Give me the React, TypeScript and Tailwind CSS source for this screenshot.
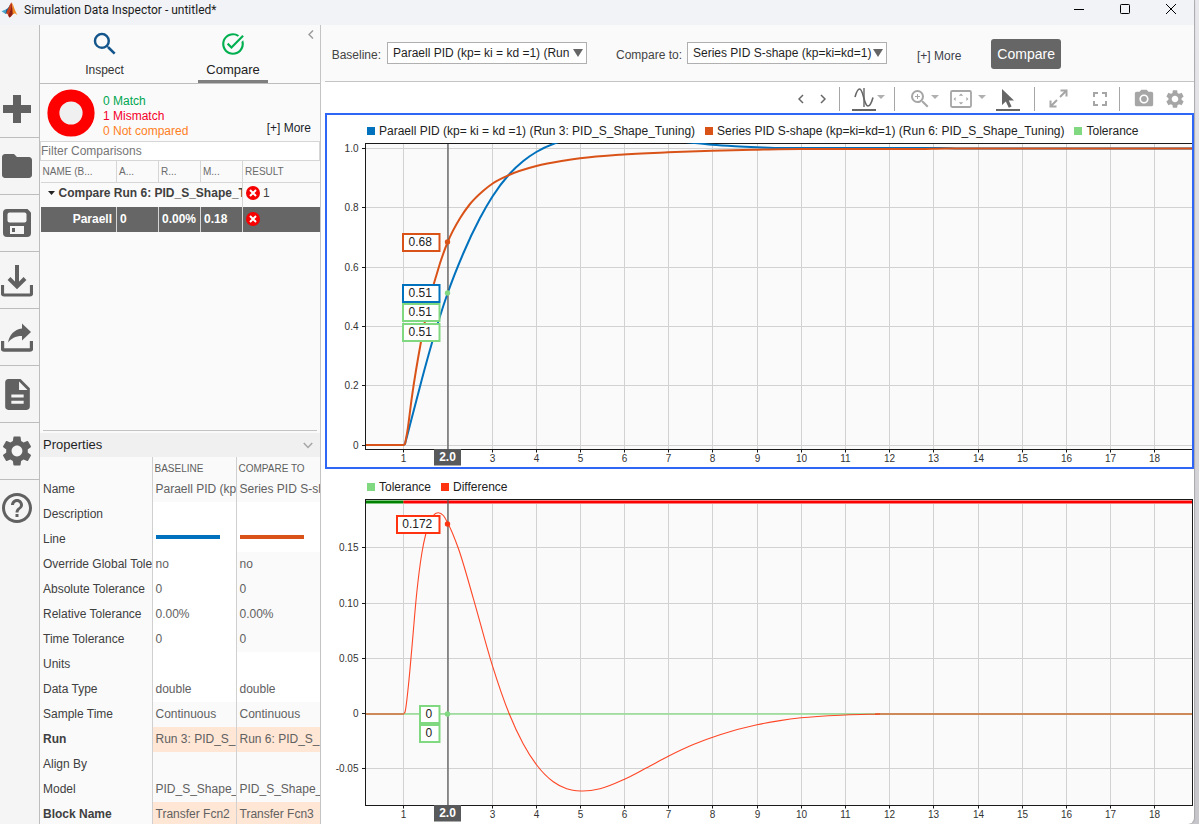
import type { ReactNode } from "react";
import {
  MdDescription,
  MdFolder,
  MdFullscreen,
  MdHelpOutline,
  MdPhotoCamera,
  MdSearch,
  MdSettings,
  MdTaskAlt,
  MdZoomIn,
} from "react-icons/md";

type Point = [number, number];

const BLUE = "#0072bd";
const ORANGE = "#d95319";
const GREEN = "#80d880";
const RED = "#ff330f";

/* ---------- window chrome ---------- */

function AppLogo() {
  return (
    <svg width="17" height="16" viewBox="0 0 17 16" aria-hidden="true">
      <path d="M0.5 9.3 5.2 7.2 7.6 9.2 4.6 12Z" fill="#4aa3c9" />
      <path d="M5.2 7.2C7 6.8 7.8 4.4 9.4 2.2L7.6 9.6 4.6 12Z" fill="#1f5f94" />
      <path d="M10.6 0.6C9.2 1 8.2 5.6 6.2 8.6L5 11.6C7 11 7.4 14.6 8.4 15.4 10.6 15 11.4 12 13 11.4Z" fill="#c8401c" />
      <path d="M10.6 0.6C12.6 2.6 13.8 9.4 16.6 13.2 14.8 11.4 12.8 11 11.2 12.4 11.8 9 11.6 3.6 10.6 0.6Z" fill="#f08a24" />
      <path d="M10.6 0.6C10.9 4 9.6 10 7.4 13.2L8.4 15.4C10 14.8 10.6 13 11.6 12Z" fill="#8c1f16" />
    </svg>
  );
}

function TitleBar() {
  return (
    <header className="flex h-[25px] shrink-0 items-start bg-[#f2f3f7] pt-[2px] pl-[1px]">
      <AppLogo />
      <h1 className="ml-[6px] flex-1 font-['Roboto',sans-serif] text-[12px] leading-4 text-[#1b1b1b]">
        Simulation Data Inspector - untitled*
      </h1>
      <div className="flex items-start pt-[1px] text-black">
        <button aria-label="Minimize" className="flex w-[46px] justify-center">
          <svg width="12" height="12" viewBox="0 0 12 12" stroke="currentColor"><path d="M1 6.5H11" /></svg>
        </button>
        <button aria-label="Maximize" className="flex w-[46px] justify-center">
          <svg width="12" height="12" viewBox="0 0 12 12" stroke="currentColor" fill="none"><rect x="1.5" y="1.5" width="9" height="9" rx="0.8" /></svg>
        </button>
        <button aria-label="Close" className="flex w-[46px] justify-center">
          <svg width="12" height="12" viewBox="0 0 12 12" stroke="currentColor"><path d="M1 1 11 11M11 1 1 11" /></svg>
        </button>
      </div>
    </header>
  );
}

/* ---------- left icon rail ---------- */

const PlusIcon = () => (
  <svg width="28" height="28" viewBox="0 0 28 28" fill="currentColor"><path d="M10 0h8v10h10v8H18v10h-8V18H0v-8h10z" /></svg>
);

const SaveIcon = () => (
  <svg width="28" height="28" viewBox="0 0 28 28">
    <path d="M4 0H24.5L28 3.5V24a4 4 0 0 1-4 4H4a4 4 0 0 1-4-4V4a4 4 0 0 1 4-4z" fill="currentColor" />
    <rect x="4.5" y="3.5" width="19" height="10" rx="2" fill="#f5f5f5" />
    <rect x="7" y="17" width="14" height="8" fill="#f5f5f5" />
    <rect x="9" y="19" width="3" height="4" fill="currentColor" />
  </svg>
);

const ImportIcon = () => (
  <svg width="32" height="36" viewBox="0 -4 32 36" fill="none" stroke="currentColor">
    <path d="M16 -1V20" strokeWidth="4" />
    <path d="M8 12.5 16 20.5 24 12.5" strokeWidth="4" />
    <path d="M1.5 19V27.5Q1.5 29 3 29H29Q30.5 29 30.5 27.5V19" strokeWidth="3.2" />
  </svg>
);

const ExportIcon = () => (
  <svg width="32" height="34" viewBox="0 -2 32 34">
    <path d="M1.5 19V26.5Q1.5 28 3 28H29Q30.5 28 30.5 26.5V19" fill="none" stroke="currentColor" strokeWidth="3.4" />
    <path d="M21 1.5 30 10 21 18.5V14C14 14 10.5 16.5 7 20.5 8.5 13 13 7.5 21 6.5Z" fill="currentColor" />
  </svg>
);

const railItems: { label: string; icon: ReactNode }[] = [
  { label: "New", icon: <PlusIcon /> },
  { label: "Open", icon: <MdFolder size={36} /> },
  { label: "Save", icon: <SaveIcon /> },
  { label: "Import", icon: <ImportIcon /> },
  { label: "Export", icon: <ExportIcon /> },
  { label: "Report", icon: <MdDescription size={37} /> },
  { label: "Preferences", icon: <MdSettings size={36} /> },
  { label: "Help", icon: <MdHelpOutline size={36} /> },
];

function IconRail() {
  return (
    <nav className="flex w-10 shrink-0 flex-col border-r border-[#bdbdbd] bg-[#f5f5f5] pt-14">
      {railItems.map((item) => (
        <button
          key={item.label}
          aria-label={item.label}
          className="flex h-[57px] shrink-0 items-center justify-center border-b border-[#bdbdbd] pr-[5px] text-[#616161] last:border-transparent [&>svg]:shrink-0"
        >
          {item.icon}
        </button>
      ))}
    </nav>
  );
}

/* ---------- comparison panel ---------- */

function ModeTabs() {
  return (
    <div className="flex h-[59px] shrink-0 border-b border-[#bdbdbd]">
      <button className="flex w-[129px] flex-col items-center pt-1">
        <MdSearch size={30} className="text-[#14568c]" />
        <span className="mt-[3px] text-[12px] leading-4 text-[#333]">Inspect</span>
      </button>
      <button className="flex w-[128px] flex-col items-center pt-[6px]">
        <MdTaskAlt size={26} className="text-[#00b050]" />
        <span className="mt-[5px] text-[13px] leading-4 text-[#222]">Compare</span>
        <span className="mt-[2px] h-[3px] w-[70px] bg-[#7f7f7f]" />
      </button>
      <button aria-label="Collapse panel" className="flex flex-1 justify-center pt-[5px] pl-1">
        <svg width="6" height="9" viewBox="0 0 6 9" fill="none" stroke="#9a9a9a" strokeWidth="1.4"><path d="M5 0.5 1 4.5 5 8.5" /></svg>
      </button>
    </div>
  );
}

function Summary() {
  return (
    <div className="flex h-[57px] shrink-0 items-center pl-[7px]">
      <svg width="48" height="48" viewBox="0 0 48 48" aria-hidden="true">
        <circle cx="24" cy="24" r="17.6" fill="#f0f0f0" stroke="#ff0000" strokeWidth="12" />
      </svg>
      <ul className="mt-[7px] ml-2 flex-1 text-[12px] leading-[15px]">
        <li className="text-[#00a650]">0 Match</li>
        <li className="text-[#f5002a]">1 Mismatch</li>
        <li className="text-[#ff7f1e]">0 Not compared</li>
      </ul>
      <button className="mt-[30px] mr-[9px] text-[12px] leading-4 text-[#1b1f2a]">[+] More</button>
    </div>
  );
}

const FailBadge = () => (
  <svg width="14" height="14" viewBox="0 0 14 14" role="img" aria-label="Mismatch" className="inline-block shrink-0">
    <circle cx="7" cy="7" r="7" fill="#f60000" />
    <path d="M4 4 10 10M10 4 4 10" stroke="#fff" strokeWidth="2" />
  </svg>
);

function ComparisonTable() {
  const head = ["NAME (B...", "A...", "R...", "M...", "RESULT"];
  return (
    <table className="w-full table-fixed border-collapse text-left">
      <colgroup>
        <col className="w-[76px]" />
        <col className="w-[42px]" />
        <col className="w-[42px]" />
        <col className="w-[42px]" />
        <col />
      </colgroup>
      <thead>
        <tr className="h-[21px] text-[10px] leading-4 text-[#6b6b6b]">
          {head.map((h) => (
            <th key={h} className="border-r border-b border-[#d6d6d6] pt-0.5 pl-[2px] font-normal last:border-r-0">
              {h}
            </th>
          ))}
        </tr>
      </thead>
      <tbody className="text-[12px] leading-4">
        <tr className="h-[25px] text-[#404040]">
          <td colSpan={4} className="overflow-hidden border-r border-[#d6d6d6] pb-1 pl-[7px] font-bold whitespace-nowrap">
            <span className="flex items-center">
              <svg width="7" height="4" viewBox="0 0 7 4" className="mr-1 shrink-0"><path d="M0 0H7L3.5 4Z" fill="#222" /></svg>
              Compare Run 6: PID_S_Shape_Tuning
            </span>
          </td>
          <td className="pb-1 pl-[3px]">
            <span className="flex items-center gap-[3px]">
              <FailBadge />1
            </span>
          </td>
        </tr>
        <tr className="h-[25px] bg-[#666] font-bold text-white">
          <td className="border-r border-l border-[#d6d6d6] border-l-[#fafafa] pr-1 pb-0.5 text-right">Paraell</td>
          <td className="border-r border-[#d6d6d6] pb-0.5 pl-[3px]">0</td>
          <td className="border-r border-[#d6d6d6] pb-0.5 pl-[3px]">0.00%</td>
          <td className="border-r border-[#d6d6d6] pb-0.5 pl-[3px]">0.18</td>
          <td className="pb-0.5 pl-[3px]">
            <span className="flex items-center"><FailBadge /></span>
          </td>
        </tr>
      </tbody>
    </table>
  );
}

/* ---------- properties ---------- */

type Tone = "base" | "edit" | "diff" | "split";

const properties: { name: string; a: ReactNode; b: ReactNode; tone: Tone }[] = [
  { name: "Name", a: "Paraell PID (kp= ki = kd =1)", b: "Series PID S-shape (kp=ki=kd=1)", tone: "base" },
  { name: "Description", a: "", b: "", tone: "edit" },
  {
    name: "Line",
    a: <span className="mb-1 block h-1 w-16 bg-[#0072bd]" />,
    b: <span className="mb-1 block h-1 w-16 bg-[#d95319]" />,
    tone: "edit",
  },
  { name: "Override Global Tolerance", a: "no", b: "no", tone: "split" },
  { name: "Absolute Tolerance", a: "0", b: "0", tone: "split" },
  { name: "Relative Tolerance", a: "0.00%", b: "0.00%", tone: "split" },
  { name: "Time Tolerance", a: "0", b: "0", tone: "split" },
  { name: "Units", a: "", b: "", tone: "edit" },
  { name: "Data Type", a: "double", b: "double", tone: "edit" },
  { name: "Sample Time", a: "Continuous", b: "Continuous", tone: "base" },
  { name: "Run", a: "Run 3: PID_S_Shape_Tuning", b: "Run 6: PID_S_Shape_Tuning", tone: "diff" },
  { name: "Align By", a: "", b: "", tone: "base" },
  { name: "Model", a: "PID_S_Shape_Tuning", b: "PID_S_Shape_Tuning", tone: "base" },
  { name: "Block Name", a: "Transfer Fcn2", b: "Transfer Fcn3", tone: "diff" },
];

const toneA: Record<Tone, string> = {
  base: "bg-[#fafafa]",
  edit: "bg-white",
  diff: "bg-[#ffe6d5]",
  split: "bg-white",
};
const toneB: Record<Tone, string> = { ...toneA, split: "bg-[#fafafa]" };

function Properties() {
  return (
    <section className="shrink-0">
      <div className="mx-[3px] border-t border-[#c4c4c4] pb-[2px]" />
      <div className="flex h-6 items-center justify-between bg-[#f0f0f0] pr-[7px] pl-[3px]">
        <h2 className="text-[13px] leading-4 text-[#1f1f1f]">Properties</h2>
        <button aria-label="Collapse properties">
          <svg width="10" height="7" viewBox="0 0 10 7" fill="none" stroke="#a6a6a6" strokeWidth="1.5"><path d="M0.8 1 5 5.5 9.2 1" /></svg>
        </button>
      </div>
      <table className="w-full table-fixed border-collapse text-left text-[12px] leading-4">
        <colgroup>
          <col className="w-[112px]" />
          <col className="w-[84px]" />
          <col />
        </colgroup>
        <thead>
          <tr className="h-5 text-[10px] text-[#5f5f5f]">
            <td className="border-r border-[#d0d0d0]" />
            <th className="border-r border-[#d0d0d0] pt-1 pl-[2px] font-normal">BASELINE</th>
            <th className="pt-1 pl-[2px] font-normal">COMPARE TO</th>
          </tr>
        </thead>
        <tbody>
          {properties.map((p) => (
            <tr key={p.name} className="h-[25px] text-[#616161]">
              <th
                className={
                  "overflow-hidden border-r border-[#d0d0d0] pb-0.5 pl-[3px] whitespace-nowrap text-[#404040] " +
                  (p.tone === "diff" ? "font-bold" : "font-normal")
                }
              >
                {p.name}
              </th>
              <td className={"overflow-hidden border-r border-[#d0d0d0] pb-0.5 pl-[3px] whitespace-nowrap " + toneA[p.tone]}>{p.a}</td>
              <td className={"overflow-hidden pb-0.5 pl-[3px] whitespace-nowrap " + toneB[p.tone]}>{p.b}</td>
            </tr>
          ))}
        </tbody>
      </table>
    </section>
  );
}

function ComparePanel() {
  return (
    <aside className="flex w-[281px] shrink-0 flex-col overflow-hidden border-r border-[#c4c4c4] bg-[#fafafa]">
      <ModeTabs />
      <Summary />
      <input
        type="text"
        aria-label="Filter Comparisons"
        placeholder="Filter Comparisons"
        className="h-5 w-full shrink-0 border border-[#d6d6d6] bg-white text-[12px] leading-4 outline-none placeholder:text-[#757575]"
      />
      <ComparisonTable />
      <div className="min-h-0 flex-1" />
      <div className="h-[394px] shrink-0 overflow-hidden">
        <Properties />
      </div>
    </aside>
  );
}

/* ---------- run selection and toolbar ---------- */

function RunSelect({ id, label, value }: { id: string; label: string; value: string }) {
  return (
    <div className="flex items-center">
      <label htmlFor={id} className="w-[71px] pt-1 pr-1.5 text-right text-[12px] leading-4 whitespace-nowrap text-[#444]">
        {label}
      </label>
      <div className="relative">
        <select
          id={id}
          className="block h-[22px] w-[200px] appearance-none border border-[#b0b0b0] bg-white pr-3 pl-[5px] text-[12px] leading-4 text-[#1f1f1f]"
        >
          <option>{value}</option>
        </select>
        <svg width="10" height="8" viewBox="0 0 10 8" className="pointer-events-none absolute top-[7px] right-1">
          <path d="M0 0H10L5 8Z" fill="#666" />
        </svg>
      </div>
    </div>
  );
}

function RunBar() {
  return (
    <div className="flex h-[57px] shrink-0 bg-[#fafafa]">
      <div className="ml-1 flex flex-1 items-center border-b border-[#c4c4c4]">
        <div className="-ml-[9px]">
          <RunSelect id="baseline" label="Baseline:" value="Paraell PID (kp= ki = kd =1) (Run" />
        </div>
        <div className="ml-[29px]">
          <RunSelect id="compare-to" label="Compare to:" value="Series PID S-shape (kp=ki=kd=1)" />
        </div>
        <button className="mt-[5px] ml-[30px] text-[12px] leading-4 text-[#3c3f4a]">[+] More</button>
        <button className="mt-0.5 ml-[30px] h-[30px] rounded-[3px] bg-[#666] px-1.5 text-[14px] leading-4 text-white">Compare</button>
      </div>
    </div>
  );
}

const Separator = () => <span className="mx-2 h-6 w-px bg-[#a6a6a6]" />;

const Caret = () => (
  <button aria-label="More options" className="mb-1 flex w-[10px] justify-center">
    <svg width="8" height="4" viewBox="0 0 8 4"><path d="M0 0H8L4 4Z" fill="#b0b0b0" /></svg>
  </button>
);

function Toolbar() {
  return (
    <div className="flex h-[31px] shrink-0 items-center justify-end pt-0.5 pr-1 text-[#a6a6a6]">
      <button aria-label="Previous" className="flex w-7 justify-center">
        <svg width="6" height="10" viewBox="0 0 6 10" fill="none" stroke="#666" strokeWidth="1.5"><path d="M5 1 1 5 5 9" /></svg>
      </button>
      <button aria-label="Next" className="flex w-4 justify-center">
        <svg width="6" height="10" viewBox="0 0 6 10" fill="none" stroke="#666" strokeWidth="1.5"><path d="M1 1 5 5 1 9" /></svg>
      </button>
      <Separator />
      <button aria-label="Data cursors" className="ml-1 flex h-6 w-6 flex-col items-center justify-between border-b-2 border-[#666]">
        <svg width="20" height="22" viewBox="0 0 20 22" fill="none" stroke="#666" strokeWidth="1.6">
          <path d="M1 10C2.4 5 3.8 2 5.6 2 9.5 2 9.8 19 14 19 16.2 19 17.6 15.5 19 10.5" />
          <path d="M10 1V20" strokeWidth="1.4" />
        </svg>
      </button>
      <Caret />
      <Separator />
      <button aria-label="Zoom in" className="ml-1.5 flex w-[21px] justify-center"><MdZoomIn size={24} className="shrink-0" /></button>
      <Caret />
      <button aria-label="Fit to view" className="ml-2 flex w-[26px] justify-center">
        <svg width="22" height="18" viewBox="0 0 22 18">
          <rect x="1" y="1" width="20" height="16" rx="1.2" fill="none" stroke="currentColor" strokeWidth="1.8" />
          <path d="M11 3.6 13.2 5.8H8.8ZM11 14.4 13.2 12.2H8.8ZM3.6 9 5.6 7V11ZM18.4 9 16.4 7V11Z" fill="currentColor" />
        </svg>
      </button>
      <span className="ml-[3px]"><Caret /></span>
      <button aria-label="Select" className="mr-1.5 ml-[9px] flex h-6 w-6 flex-col items-center justify-end border-b-2 border-[#666]">
        <svg width="14" height="20" viewBox="0 0 14 20"><path d="M1 0V16L4.8 12.6 7.8 18.8 10.6 17.4 7.8 11.6H13Z" fill="#666" /></svg>
      </button>
      <Separator />
      <button aria-label="Expand" className="flex w-[30px] justify-center">
        <svg width="19" height="19" viewBox="0 0 19 19" fill="none" stroke="currentColor" strokeWidth="2">
          <path d="M11.5 1.5H17.5V7.5M17 2 11 8M7.5 17.5H1.5V11.5M2 17 8 11" />
        </svg>
      </button>
      <button aria-label="Full screen" className="ml-4 flex w-[22px] justify-center"><MdFullscreen size={24} className="shrink-0" /></button>
      <Separator />
      <button aria-label="Snapshot" className="flex w-8 justify-center"><MdPhotoCamera size={22} /></button>
      <button aria-label="Settings" className="flex w-[30px] justify-center"><MdSettings size={22} /></button>
    </div>
  );
}

/* ---------- charts ---------- */

/** Smooth cubic path through unevenly spaced samples. */
function spline(pts: Point[]): string {
  const step = pts.slice(1).map((p, i) => p[0] - pts[i][0]);
  const slope = pts.slice(1).map((p, i) => (p[1] - pts[i][1]) / step[i]);
  const tangent = pts.map((_, i) => {
    if (i === 0) return slope[0];
    if (i === pts.length - 1) return slope[i - 1];
    // A flat neighbour keeps the curve flat, so settled signals do not ripple.
    if (slope[i - 1] === 0 || slope[i] === 0) return 0;
    return (slope[i - 1] * step[i] + slope[i] * step[i - 1]) / (step[i - 1] + step[i]);
  });
  let d = `M${pts[0][0]} ${pts[0][1]}`;
  for (let i = 0; i < step.length; i++) {
    const [x1, y1] = pts[i];
    const [x2, y2] = pts[i + 1];
    const h = step[i] / 3;
    d += `C${x1 + h} ${y1 + tangent[i] * h} ${x2 - h} ${y2 - tangent[i + 1] * h} ${x2} ${y2}`;
  }
  return d;
}

const seriesTrace: Point[] = [
  [405, 444], [407.3, 431.7], [411.7, 398.3], [421, 341.7], [428.7, 304], [440, 263.3],
  [447.7, 242], [460, 218.3], [470, 204], [483.3, 190.7], [492.3, 183.7], [509, 175],
  [536.3, 166], [563.3, 160.7], [580, 158.3], [620, 154.7], [668, 152.3], [712, 150.7], [757, 149.7],
  [800, 149], [850, 149], [920, 149], [945, 148.5], [1192, 148.5],
];

const parallelTrace: Point[] = [
  [405, 444], [411.7, 418.3], [421.7, 380], [431.7, 343.8], [447.7, 293], [463, 254],
  [480, 218], [492.3, 196.7], [509, 174.5], [523.3, 161], [536.3, 152], [555, 143.3], [580, 138],
  [624, 136], [668, 140], [692, 142.7], [712, 144.7], [735, 146.2], [757, 147.2], [783, 148],
  [860, 148], [940, 148], [960, 148.5], [1192, 148.5],
];

const differenceTrace: Point[] = [
  [404, 713.5], [405, 712], [408.3, 686.7], [411.7, 650], [416.7, 593.3], [421.7, 554], [426, 533],
  [433.3, 515.5], [438, 512.8], [443.3, 515.5], [448, 523.5], [458.3, 548.3], [473.3, 598.3],
  [491.7, 663.3], [509.3, 714], [523.3, 744], [536.7, 765], [553.3, 781.8], [566.7, 788.8], [580.7, 791],
  [600, 788.8], [624, 779.5], [646.7, 767.8], [668.3, 756.2], [693.3, 744.5], [720, 734.7], [757, 724.8],
  [780, 720.6], [801, 717.8], [845, 715], [880, 714],
];

const xTicks = Array.from({ length: 18 }, (_, i) => i + 1);
const xAt = (t: number) => Math.round(403.2 + 44.18 * (t - 1)) + 0.5;

function Axes({ top, bottom, yTicks }: { top: number; bottom: number; yTicks: { label: string; y: number }[] }) {
  return (
    <g>
      <rect x="365.5" y={top} width="827" height={bottom - top} fill="#fafafa" />
      <g stroke="#d2d2d2">
        {xTicks.map((t) => <path key={t} d={`M${xAt(t)} ${top}V${bottom}`} />)}
        {yTicks.map((k) => <path key={k.label} d={`M366 ${k.y}H1192`} />)}
      </g>
      <g stroke="#1a1a1a">
        {xTicks.map((t) => <path key={t} d={`M${xAt(t)} ${bottom}v3`} />)}
        {yTicks.map((k) => <path key={k.label} d={`M362 ${k.y}h4`} />)}
        <rect x="365.5" y={top} width="827" height={bottom - top} fill="none" />
      </g>
      <g fontSize="10" fill="#333">
        {xTicks.filter((t) => t !== 2).map((t) => (
          <text key={t} x={xAt(t)} y={bottom + 12.5} textAnchor="middle">{t}</text>
        ))}
        {yTicks.map((k) => (
          <text key={k.label} x="358.5" y={k.y + 3} textAnchor="end">{k.label}</text>
        ))}
      </g>
    </g>
  );
}

function Cursor({ top, bottom }: { top: number; bottom: number }) {
  return (
    <g>
      <path d={`M448 ${top}V${bottom}`} stroke="#5a5a5a" strokeOpacity="0.8" strokeWidth="1.6" />
      <rect x="434" y={bottom} width="27" height="16.5" fill="#58595b" />
      <text x="447.5" y={bottom + 12} textAnchor="middle" fontSize="12" fontWeight="bold" fill="#fff">2.0</text>
    </g>
  );
}

function ValueTag({ x, y, value, color }: { x: number; y: number; value: string; color: string }) {
  return (
    <g>
      <rect x={x} y={y} width={439.5 - x} height="17" fill="#fff" stroke={color} strokeWidth="2" />
      <text x={(439.5 + x) / 2 - 1} y={y + 12} textAnchor="middle" fontSize="12" fill="#222">{value}</text>
    </g>
  );
}

function ComparisonChart() {
  return (
    <svg viewBox="327 140 865 327" className="block w-full" role="img" aria-label="Baseline and compared signals">
      <clipPath id="top-plot"><rect x="366" y="143" width="826" height="306" /></clipPath>
      <Axes
        top={143.5}
        bottom={449.5}
        yTicks={[
          { label: "1.0", y: 148.5 },
          { label: "0.8", y: 207.5 },
          { label: "0.6", y: 267.5 },
          { label: "0.4", y: 326.5 },
          { label: "0.2", y: 385.5 },
          { label: "0", y: 445.5 },
        ]}
      />
      <g clipPath="url(#top-plot)" fill="none" strokeWidth="2">
        <path d={"M366 445H403.5L405 444" + spline(parallelTrace).replace("M", "L")} stroke={BLUE} />
        <path d={"M366 445H403.5L405 444" + spline(seriesTrace).replace("M", "L")} stroke={ORANGE} />
      </g>
      <Cursor top={144} bottom={449} />
      <circle cx="447.5" cy="242" r="2.7" fill={ORANGE} />
      <circle cx="447.5" cy="293" r="2.7" fill={GREEN} />
      <ValueTag x={403} y={234} value="0.68" color={ORANGE} />
      <ValueTag x={403} y={304} value="0.51" color={GREEN} />
      <ValueTag x={403} y={324} value="0.51" color={GREEN} />
      <ValueTag x={403} y={285} value="0.51" color={BLUE} />
    </svg>
  );
}

function DifferenceChart() {
  return (
    <svg viewBox="325 496 869 328" className="block w-full" role="img" aria-label="Difference and tolerance">
      <Axes
        top={499.5}
        bottom={805.5}
        yTicks={[
          { label: "0.15", y: 547.5 },
          { label: "0.10", y: 603.5 },
          { label: "0.05", y: 658.5 },
          { label: "0", y: 713.5 },
          { label: "-0.05", y: 768.5 },
        ]}
      />
      <path d="M366 502H403.5" stroke="#7fc67f" strokeWidth="4" />
      <path d="M403.5 502H1192" stroke="#f58080" strokeWidth="4" />
      <path d="M366 502H403.5" stroke="#008000" strokeWidth="2" />
      <path d="M403.5 502H1192" stroke="#ff0000" strokeWidth="2" />
      <path d="M366 714H1192" stroke="#92dd92" strokeWidth="1.6" />
      <path d="M366 714H404M875 714H1192" stroke="#cd8a58" strokeWidth="1.8" />
      <path d={spline(differenceTrace)} fill="none" stroke={RED} strokeOpacity="0.9" strokeWidth="1.1" />
      <Cursor top={500} bottom={805} />
      <circle cx="447.5" cy="524" r="2.7" fill={RED} />
      <circle cx="447.5" cy="714" r="2.7" fill={GREEN} />
      <ValueTag x={397} y={516} value="0.172" color={RED} />
      <ValueTag x={420} y={725} value="0" color={GREEN} />
      <ValueTag x={420} y={706} value="0" color={GREEN} />
    </svg>
  );
}

function Legend({ items }: { items: { label: string; swatch: string }[] }) {
  return (
    <ul className="flex gap-[10px] overflow-hidden text-[12px] leading-4 whitespace-nowrap text-[#222]">
      {items.map((it) => (
        <li key={it.label} className="flex items-center gap-1">
          <span className={"size-2 " + it.swatch} />
          {it.label}
        </li>
      ))}
    </ul>
  );
}

function ChartArea() {
  return (
    <main className="ml-1 flex min-w-0 flex-col">
      <section className="border-2 border-[#2f66f5]">
        <div className="h-[25px] pt-2 pl-10">
          <Legend
            items={[
              { label: "Paraell PID (kp= ki = kd =1) (Run 3: PID_S_Shape_Tuning)", swatch: "bg-[#0072bd]" },
              { label: "Series PID S-shape (kp=ki=kd=1) (Run 6: PID_S_Shape_Tuning)", swatch: "bg-[#d95319]" },
              { label: "Tolerance", swatch: "bg-[#80d880]" },
            ]}
          />
        </div>
        <ComparisonChart />
      </section>
      <section>
        <div className="h-[27px] pt-[10px] pl-[42px]">
          <Legend
            items={[
              { label: "Tolerance", swatch: "bg-[#80d880]" },
              { label: "Difference", swatch: "bg-[#ff330f]" },
            ]}
          />
        </div>
        <DifferenceChart />
      </section>
    </main>
  );
}

export default function App() {
  return (
    <div className="flex h-screen overflow-hidden bg-linear-to-b from-[#e8e8ec] via-[#d6d6da] to-[#c6c6ca] pr-[5px] font-['Liberation_Sans',Arial,sans-serif]">
      <div className="flex min-w-0 flex-1 flex-col overflow-hidden rounded-br-md bg-white shadow-[1px_0_1px_#a8a8ac]">
        <TitleBar />
        <div className="flex min-h-0 flex-1">
          <IconRail />
          <ComparePanel />
          <div className="flex min-w-0 flex-1 flex-col overflow-hidden">
            <RunBar />
            <Toolbar />
            <ChartArea />
          </div>
        </div>
      </div>
    </div>
  );
}
